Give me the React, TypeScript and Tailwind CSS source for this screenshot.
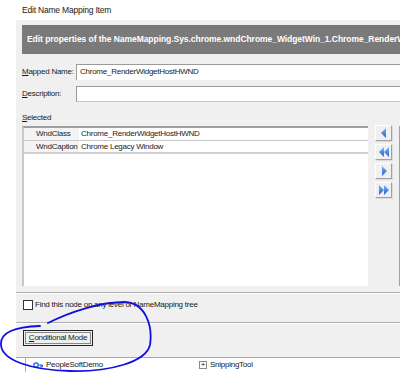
import React from "react";

const Tri = ({ dir, double }: { dir: "l" | "r"; double?: boolean }) => (
  <svg width="12" height="10" viewBox="0 0 12 10">
    <defs>
      <linearGradient id={"g" + dir + (double ? "d" : "s")} x1="0" y1="0" x2="0" y2="1">
        <stop offset="0" stopColor="#7fb2f5" />
        <stop offset="1" stopColor="#1f63d6" />
      </linearGradient>
    </defs>
    {dir === "l" && !double && <polygon points="8,0 3,5 8,10" fill={`url(#gls)`} />}
    {dir === "r" && !double && <polygon points="4,0 9,5 4,10" fill={`url(#grs)`} />}
    {dir === "l" && double && (
      <>
        <polygon points="6,0 1,5 6,10" fill={`url(#gld)`} />
        <polygon points="11,0 6,5 11,10" fill={`url(#gld)`} />
      </>
    )}
    {dir === "r" && double && (
      <>
        <polygon points="1,0 6,5 1,10" fill={`url(#grd)`} />
        <polygon points="6,0 11,5 6,10" fill={`url(#grd)`} />
      </>
    )}
  </svg>
);

const NavBtn = ({ children }: { children: React.ReactNode }) => (
  <div className="w-[17px] h-[16px] bg-[#f0f0f0] border border-t-white border-l-white border-r-[#a0a0a0] border-b-[#a0a0a0] flex items-center justify-center shadow-[1px_1px_0_#dcdcdc]">
    {children}
  </div>
);

export default function App() {
  return (
    <div
      className="relative w-[400px] h-[372px] bg-white overflow-hidden text-[8px] tracking-[-0.25px] text-[#1a1a1a] whitespace-nowrap"
      style={{ fontFamily: "'Liberation Sans', Arial, sans-serif" }}
    >
      <div className="h-[20px] pl-[22px] pt-[3px] text-[8.5px] tracking-[-0.2px] leading-[14px]">Edit Name Mapping Item</div>
      <div className="ml-[16px] h-[338px] bg-[#f0f0f0] flex flex-col border-b border-[#a8a8a8]">
        <div className="pt-[5px] pl-[6px]">
          <div className="h-[29px] bg-[#7a7a7a] flex items-center pl-[5px] overflow-hidden text-white font-bold text-[8.5px] tracking-[-0.05px]">
            Edit properties of the NameMapping.Sys.chrome.wndChrome_WidgetWin_1.Chrome_RenderWidgetHostHWND
          </div>
        </div>
        <div className="flex items-center mt-[10px] pl-[6px] h-[16px]">
          <div className="w-[54px]"><span className="underline">M</span>apped Name:</div>
          <div className="flex-1 h-[16px] bg-white border-t-[1px] border-t-[#9a9a9a] border-l border-l-[#9a9a9a] pl-[3px] leading-[14px]">
            Chrome_RenderWidgetHostHWND
          </div>
        </div>
        <div className="flex items-center mt-[6px] pl-[6px] h-[16px]">
          <div className="w-[54px]"><span className="underline">D</span>escription:</div>
          <div className="flex-1 h-[16px] bg-white border-t border-t-[#9a9a9a] border-l border-l-[#9a9a9a] border-b border-b-[#c8c8c8]"></div>
        </div>
        <div className="pl-[6px] mt-[9px] h-[14px] leading-[14px]"><span className="underline">S</span>elected</div>
        <div className="flex mt-[1px] pl-[6px] h-[160px]">
          <div className="w-[346px] h-[160px] bg-white border-l-2 border-l-[#c8c8c8] border-t-2 border-t-[#a0a0a0] flex flex-col">
            <div className="flex h-[13px] border-b border-[#c8c8c8] leading-[12px]">
              <div className="w-[55px] pl-[12px] bg-[#f4f4f4]">WndClass</div>
              <div className="pl-[2px]">Chrome_RenderWidgetHostHWND</div>
            </div>
            <div className="flex h-[13px] border-b-2 border-[#d0d0d0] leading-[12px]">
              <div className="w-[55px] pl-[12px] bg-[#f4f4f4]">WndCaption</div>
              <div className="pl-[2px]">Chrome Legacy Window</div>
            </div>
          </div>
          <div className="ml-[7px] flex flex-col gap-[3px] mt-[-1px]">
            <NavBtn><Tri dir="l" /></NavBtn>
            <NavBtn><Tri dir="l" double /></NavBtn>
            <NavBtn><Tri dir="r" /></NavBtn>
            <NavBtn><Tri dir="r" double /></NavBtn>
          </div>
          <div className="ml-auto w-px h-[160px] bg-[#a0a0a0]"></div>
        </div>
        <div className="mt-[6px] h-[2px] border-t border-[#b0b0b0] border-b border-b-white"></div>
        <div className="flex items-center pl-[7px] mt-[4px] h-[14px]">
          <div className="w-[10px] h-[10px] bg-white border border-[#333]"></div>
          <div className="ml-[2px]">Find this node on any level of NameMapping tree</div>
        </div>
        <div className="mt-[10px] h-[2px] border-t border-[#b0b0b0] border-b border-b-white"></div>
        <div className="pl-[7px] mt-[6px]">
          <div className="w-[70px] h-[16px] border border-[#222] p-[1px]">
            <div className="w-full h-full border border-[#888] bg-[#f0f0f0] flex items-center justify-center leading-none">
              <span><span className="underline">C</span>onditional Mode</span>
            </div>
          </div>
        </div>
      </div>
      <div className="flex h-[14px] leading-[14px]">
        <div className="ml-[25px] w-px bg-[#b0b0b0]"></div>
        <div className="ml-[7px] flex items-center gap-[3px]">
          <svg width="10" height="8" viewBox="0 0 10 8">
            <circle cx="3" cy="4" r="2.2" fill="none" stroke="#1f63d6" strokeWidth="1.3" />
            <path d="M5 4 H9.5 M8 4 V6.5 M9.5 4 V6" stroke="#1f63d6" strokeWidth="1.2" />
          </svg>
          <span>PeopleSoftDemo</span>
        </div>
        <div className="ml-[96px] flex items-center gap-[3px]">
          <div className="w-[8px] h-[8px] border border-[#888] bg-white flex items-center justify-center text-[8px] leading-none">+</div>
          <span>SnippingTool</span>
        </div>
      </div>
      <svg className="absolute left-0 top-0 pointer-events-none" width="400" height="372" viewBox="0 0 400 372">
        <path
          d="M48 323 C 70 312, 100 302, 125 302 C 145 303, 153 325, 150 345 C 146 362, 110 372, 70 371 C 30 370, 2 360, 1 345 C 0 332, 15 327, 40 326"
          fill="none"
          stroke="#1010e0"
          strokeWidth="1.8"
          strokeLinecap="round"
        />
      </svg>
    </div>
  );
}
